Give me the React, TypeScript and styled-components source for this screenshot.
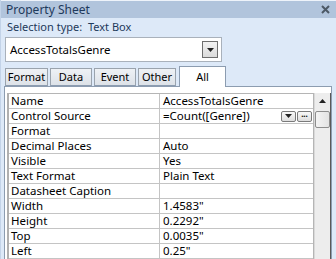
import { Fragment } from "react";
import styled, { createGlobalStyle } from "styled-components";

const GlobalStyle = createGlobalStyle`
  html, body {
    margin: 0;
    padding: 0;
    background: #dbe7f7;
  }
`;

const Sheet = styled.div`
  width: 336px;
  height: 259px;
  overflow: hidden;
  background: #dde9f8;
  font-family: "Noto Sans", "Open Sans", sans-serif;
  color: #000;
  box-sizing: border-box;
  border-left: 1px solid #c3d3e8;
  display: flex;
  flex-direction: column;
`;

const TitleBar = styled.div`
  height: 18px;
  background: #b1c4dc;
  border-top: 1px solid #eef3fa;
  box-sizing: border-box;
  display: flex;
  align-items: center;
  justify-content: space-between;
  padding: 0 6px 0 5px;
  font-size: 12px;
  color: #1e395b;
`;

const CloseIcon = () => (
  <svg width="9" height="9" viewBox="0 0 9 9">
    <path d="M1 1 L8 8 M8 1 L1 8" stroke="#4d5966" strokeWidth="2" />
  </svg>
);

const SelectionType = styled.div`
  font-size: 11px;
  color: #1e395b;
  padding: 0 0 0 6px;
  height: 19px;
  line-height: 17px;
  white-space: pre;
`;

const Combo = styled.div`
  margin-left: 4px;
  width: 217px;
  height: 25px;
  box-sizing: border-box;
  border: 1px solid #a9b1bb;
  background: #fff;
  display: flex;
  align-items: center;
  justify-content: space-between;
  padding: 0 3px 0 4px;
  font-size: 11.5px;
`;

const ComboButton = styled.div`
  width: 16px;
  height: 17px;
  box-sizing: border-box;
  border: 1px solid #6f6f6f;
  background: linear-gradient(#f2f2f2, #dcdcdc);
  display: flex;
  align-items: center;
  justify-content: center;
`;

const TabRow = styled.div`
  display: flex;
  align-items: flex-end;
  margin-top: 4px;
  padding-left: 4px;
  height: 20px;
  position: relative;
  z-index: 1;
`;

const Tab = styled.div<{ $active?: boolean; $w: number }>`
  width: ${({ $w }) => $w}px;
  height: ${({ $active }) => ($active ? 21 : 18)}px;
  box-sizing: border-box;
  margin-right: ${({ $active }) => ($active ? 0 : 2)}px;
  margin-left: ${({ $active }) => ($active ? 1 : 0)}px;
  border: 1px solid ${({ $active }) => ($active ? "#8c9cb0" : "#9aa3ad")};
  border-bottom: ${({ $active }) => ($active ? "none" : "1px solid #8c9cb0")};
  background: ${({ $active }) =>
    $active ? "#fff" : "linear-gradient(#eef1f5, #dde2e8)"};
  margin-bottom: ${({ $active }) => ($active ? -1 : 0)}px;
  font-size: 11px;
  line-height: 16px;
  text-align: center;
  padding-top: ${({ $active }) => ($active ? 2 : 0)}px;
`;

const Panel = styled.div`
  flex: 1;
  margin: 0 4px 0 3px;
  background: #fff;
  border: 1px solid #8c9cb0;
  border-bottom: none;
  padding: 6px 0 0 2px;
  display: flex;
  align-items: flex-start;
`;

const Grid = styled.div`
  display: grid;
  grid-template-columns: 151px 153px;
  grid-auto-rows: 15px;
  border: 1px solid #b5b5b5;
  border-left: 2px solid #b0b0b0;
  border-bottom: none;
`;

const Cell = styled.div<{ $name?: boolean }>`
  box-sizing: border-box;
  border-bottom: 1px solid #c4c4c4;
  border-right: ${({ $name }) => ($name ? "1px solid #c4c4c4" : "none")};
  font-size: 11.5px;
  line-height: 14px;
  padding-left: ${({ $name }) => ($name ? 2 : 3)}px;
  white-space: nowrap;
  overflow: hidden;
  display: flex;
  align-items: center;
  justify-content: space-between;
`;

const MiniButtons = styled.div`
  display: flex;
  gap: 1px;
  padding-right: 1px;
`;

const MiniButton = styled.div`
  width: 15px;
  height: 11px;
  box-sizing: border-box;
  border: 1px solid #7a7a7a;
  border-radius: 2px;
  background: linear-gradient(#f8f8f8, #dedede);
  display: flex;
  align-items: center;
  justify-content: center;
  font-size: 8px;
  line-height: 8px;
  font-weight: bold;
`;

const ScrollBar = styled.div`
  width: 17px;
  align-self: stretch;
  background: #ededed;
  border-left: 1px solid #d9d9d9;
  border-right: 1px solid #595959;
  display: flex;
  flex-direction: column;
  align-items: center;
`;

const ScrollArrow = styled.div`
  height: 15px;
  display: flex;
  align-items: center;
  justify-content: center;
`;

const Thumb = styled.div`
  width: 15px;
  height: 17px;
  box-sizing: border-box;
  border: 1px solid #8d8d8d;
  border-radius: 2px;
  background: linear-gradient(90deg, #f4f4f4, #e3e3e3);
  margin-top: 3px;
`;

const Arrow = ({ up }: { up?: boolean }) => (
  <svg width="7" height="4" viewBox="0 0 7 4">
    <path d={up ? "M0 4 L3.5 0 L7 4 Z" : "M0 0 L7 0 L3.5 4 Z"} fill="#222" />
  </svg>
);

const rows: [string, string][] = [
  ["Name", "AccessTotalsGenre"],
  ["Control Source", "=Count([Genre])"],
  ["Format", ""],
  ["Decimal Places", "Auto"],
  ["Visible", "Yes"],
  ["Text Format", "Plain Text"],
  ["Datasheet Caption", ""],
  ["Width", "1.4583\""],
  ["Height", "0.2292\""],
  ["Top", "0.0035\""],
  ["Left", "0.25\""],
];

const tabs: [string, number][] = [
  ["Format", 43],
  ["Data", 42],
  ["Event", 42],
  ["Other", 38],
];

export default function App() {
  return (
    <>
      <GlobalStyle />
      <Sheet>
        <TitleBar>
          <span>Property Sheet</span>
          <CloseIcon />
        </TitleBar>
        <SelectionType>Selection type:  Text Box</SelectionType>
        <Combo>
          <span>AccessTotalsGenre</span>
          <ComboButton>
            <Arrow />
          </ComboButton>
        </Combo>
        <TabRow>
          {tabs.map(([t, w]) => (
            <Tab key={t} $w={w}>
              {t}
            </Tab>
          ))}
          <Tab $active $w={47}>
            All
          </Tab>
        </TabRow>
        <Panel>
          <Grid>
            {rows.map(([n, v]) => (
              <Fragment key={n}>
                <Cell $name>{n}</Cell>
                <Cell>
                  <span>{v}</span>
                  {n === "Control Source" && (
                    <MiniButtons>
                      <MiniButton>
                        <Arrow />
                      </MiniButton>
                      <MiniButton>···</MiniButton>
                    </MiniButtons>
                  )}
                </Cell>
              </Fragment>
            ))}
          </Grid>
          <ScrollBar>
            <ScrollArrow>
              <Arrow up />
            </ScrollArrow>
            <Thumb />
          </ScrollBar>
        </Panel>
      </Sheet>
    </>
  );
}
